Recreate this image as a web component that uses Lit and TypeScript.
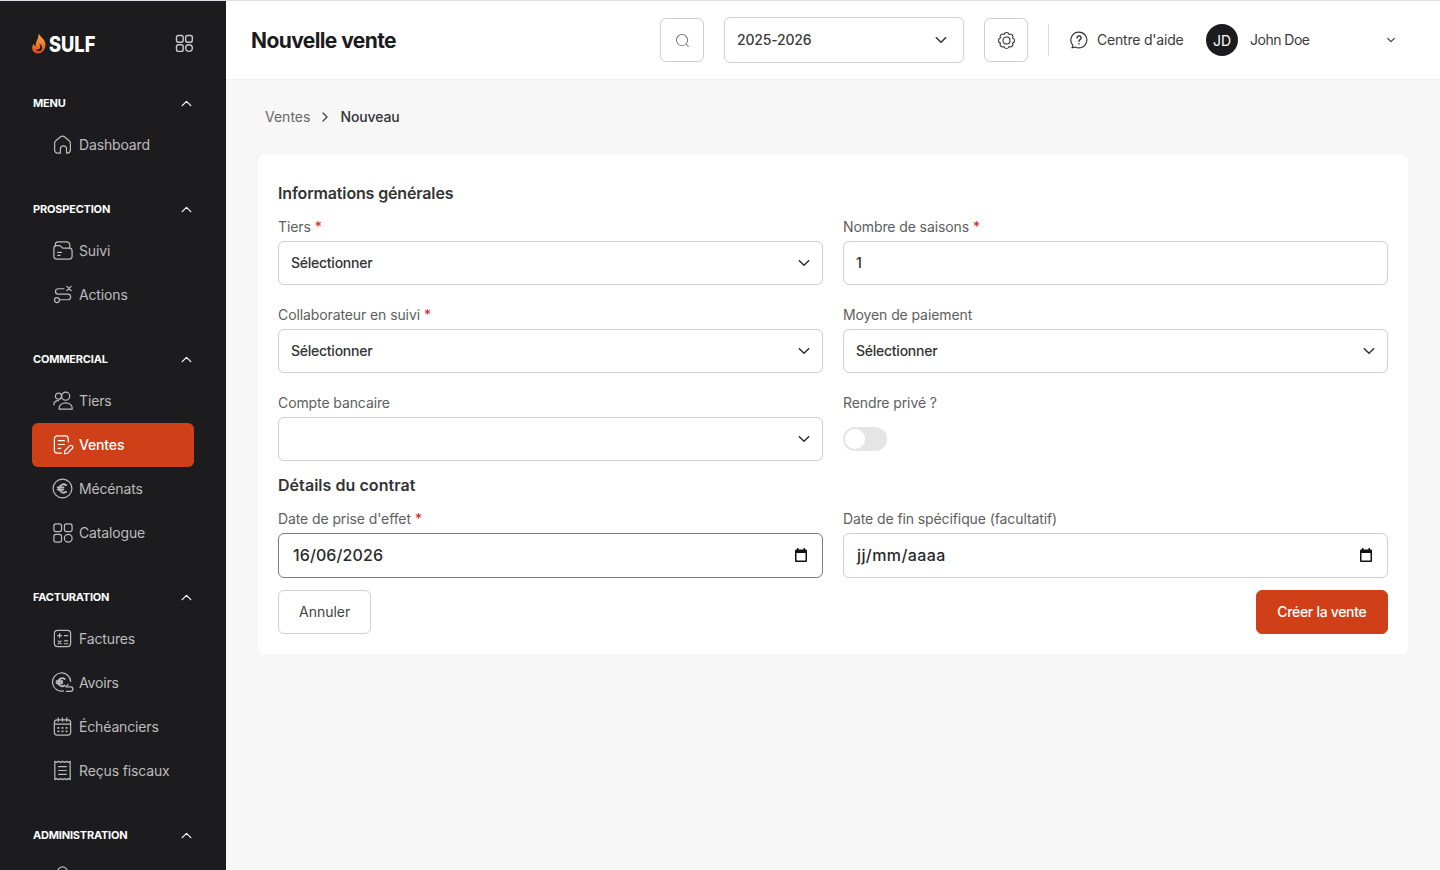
import { LitElement, css, html, svg } from "lit";
import { customElement } from "lit/decorators.js";

const icons: Record<string, unknown> = {
  home: svg`<path d="M3.800 10.600c0-1 .4-1.900 1.200-2.500l5-4.100a3.200 3.200 0 0 1 4 0l5 4.100c.8.600 1.200 1.500 1.200 2.500v7.200c0 1.800-1.400 3.200-3.200 3.200h-.8v-4.300a3.200 3.200 0 0 0-6.400 0V21H7c-1.800 0-3.200-1.400-3.200-3.200z"/>`,
  folder: svg`<path d="M4.500 7.500V6c0-1.700 1.300-3 3-3h8.500c2 0 3.600 1.600 3.600 3.600V9.500"/><path d="M3 18V10c0-1.700 1.300-3 3-3h2.600c.8 0 1.500.4 2 1l.6.8c.4.5 1 .8 1.600.8H19c1.700 0 3 1.300 3 3V18c0 1.700-1.300 3-3 3H6c-1.700 0-3-1.300-3-3z"/><path d="M7 14h4M7 17h2.500"/>`,
  routing: svg`<path d="M16.500 3.500l4.500 4.500M21 3.500L16.500 8"/><path d="M13.500 6H7.500a2.800 2.800 0 0 0 0 5.600h10a2.900 2.900 0 0 1 0 5.900H9"/><circle cx="6.200" cy="17.800" r="2.600"/>`,
  users: svg`<circle cx="7.800" cy="7.500" r="3.200"/><path d="M3 16.500c0-2.500 2-4.300 4.800-4.300"/><circle cx="15.300" cy="7.500" r="4.200"/><path d="M8.500 21v-1.200c0-3 3-5.300 6.800-5.300s6.800 2.300 6.800 5.300V21z"/>`,
  note: svg`<path d="M18 9.500V6a3 3 0 0 0-3-3H6.500a3 3 0 0 0-3 3v12a3 3 0 0 0 3 3H11"/><path d="M7.500 8h6.500M7.500 12h6.500M7.500 16h2.500"/><path d="M14 21.500l.5-3 5-5a1.900 1.900 0 0 1 2.700 2.700l-5 5z"/>`,
  euro: svg`<circle cx="12" cy="12" r="9.800"/><path d="M15.800 8.500a4.400 4.400 0 0 0-7 3.500 4.400 4.400 0 0 0 7 3.500M7 10.900h6M7 13.100h6" stroke-width="1.900"/>`,
  grid: svg`<rect x="3" y="3" width="8" height="8" rx="2.200"/><rect x="14" y="3" width="8" height="8" rx="2.200"/><rect x="3" y="14" width="8" height="8" rx="2.200"/><circle cx="18" cy="18" r="4"/>`,
  calc: svg`<rect x="3.500" y="3.500" width="17" height="17" rx="3.500"/><path d="M7 9h4M9 7v4M14 9h3.500M7.500 14.500l3 3M10.500 14.500l-3 3M14 14.500h3.500M14 17.500h3.500"/>`,
  credit: svg`<path d="M13 20.800a9.500 9.500 0 1 1 7.500-10"/><path d="M14.300 8.300a4.300 4.300 0 0 0-6.800 3.400 4.300 4.300 0 0 0 6.800 3.400M5.800 10.600h6M5.800 12.800h6" stroke-width="1.900"/><path d="M18 14l-2.500 2.500h5a2.300 2.300 0 0 1 0 4.700H16"/>`,
  calendar: svg`<rect x="3.500" y="5" width="17" height="16" rx="3"/><path d="M3.500 9.500h17M7.500 3v3.500M12 3v3.500M16.500 3v3.500"/><path d="M7.500 13.500h.5M11.800 13.500h.5M16 13.500h.5M7.500 17h.5M11.800 17h.5M16 17h.5" stroke-width="1.800"/>`,
  receipt: svg`<path d="M4 2.500l2 1 2-1 2 1 2-1 2 1 2-1 2 1 2-1v19l-2-1-2 1-2-1-2 1-2-1-2 1-2-1-2 1z"/><path d="M8 8h8M8 12h8M8 16h8"/>`,
  user: svg`<circle cx="12" cy="7" r="5"/><path d="M4 21c0-3.500 3.500-6 8-6s8 2.500 8 6"/>`,
};

const sections = [
  { title: "MENU", items: [{ icon: "home", label: "Dashboard" }] },
  { title: "PROSPECTION", items: [{ icon: "folder", label: "Suivi" }, { icon: "routing", label: "Actions" }] },
  {
    title: "COMMERCIAL",
    items: [
      { icon: "users", label: "Tiers" },
      { icon: "note", label: "Ventes", active: true },
      { icon: "euro", label: "Mécénats" },
      { icon: "grid", label: "Catalogue" },
    ],
  },
  {
    title: "FACTURATION",
    items: [
      { icon: "calc", label: "Factures" },
      { icon: "credit", label: "Avoirs" },
      { icon: "calendar", label: "Échéanciers" },
      { icon: "receipt", label: "Reçus fiscaux" },
    ],
  },
  // only the top of the next icon is visible, the row is cut by the window
  { title: "ADMINISTRATION", items: [{ icon: "user", label: "" }] },
];

// eight scallops round the centre of a 24 box
const gearPath = (() => {
  const pt = (i: number) => {
    const a = ((i + 0.5) * Math.PI) / 4;
    return `${(12 + 8.2 * Math.cos(a)).toFixed(2)} ${(12 + 8.2 * Math.sin(a)).toFixed(2)}`;
  };
  let d = `M${pt(0)}`;
  for (let i = 1; i <= 8; i++) d += `A3.200 3.200 0 0 1 ${pt(i % 8)}`;
  return d + "z";
})();

const chevron = (cls = "chev") => html`<svg class=${cls} viewBox="0 0 12 12" fill="none" stroke="currentColor" stroke-width="1.300" stroke-linecap="round" stroke-linejoin="round"><path d="M2 4l4 4 4-4"/></svg>`;

const calendarGlyph = html`<svg class="cal" viewBox="0 0 14 14"><path d="M3 0h1.500v1.500h5V0H11v1.500h1a1 1 0 0 1 1 1V13a1 1 0 0 1-1 1H2a1 1 0 0 1-1-1V2.500a1 1 0 0 1 1-1h1zM2.500 5v7.500h9V5z" fill="#111"/></svg>`;

@customElement("app-root")
export class AppRoot extends LitElement {
  static styles = css`
    :host {
      display: flex;
      height: 870px;
      overflow: hidden;
      box-sizing: border-box;
      border-top: 1px solid #dfdfe6;
      background: #f7f7f7;
      font-family: Inter, "Noto Sans", sans-serif;
      font-size: 14px;
      color: #3a3a3a;
    }
    * { box-sizing: border-box; }

    .side {
      flex: 0 0 226px;
      background: #1c1b1d;
      padding: 0 32px;
      overflow: hidden;
      color: #bdbdbd;
    }
    .brand {
      height: 82px;
      display: flex;
      align-items: center;
      justify-content: space-between;
      padding-top: 4px;
    }
    .logo { display: flex; align-items: center; gap: 3px; color: #fff; font-weight: 800; font-size: 21px; }
    .logo svg { width: 14px; height: 21px; margin-top: -2px; }
    .logo span { display: block; width: 47px; transform: scaleX(0.87); transform-origin: left center; }
    .apps { width: 20px; height: 20px; margin-top: -2px; color: #c9c9c9; }
    .section { margin-bottom: 22px; }
    .sec-head {
      height: 40px;
      display: flex;
      align-items: center;
      justify-content: space-between;
      padding-left: 1px;
      color: #fff;
      font-weight: 700;
      font-size: 11px;
      letter-spacing: -0.2px;
    }
    .sec-head svg { width: 13px; height: 13px; margin-right: 1.500px; transform: rotate(180deg); stroke-width: 1.100; }
    .item {
      height: 44px;
      display: flex;
      align-items: center;
      gap: 5px;
      padding: 0 0 1px 19px;
      border-radius: 6px;
      letter-spacing: -0.150px;
    }
    .item svg {
      width: 23px;
      height: 23px;
      fill: none;
      stroke: currentColor;
      stroke-width: 1.250;
      stroke-linecap: round;
      stroke-linejoin: round;
      flex: none;
    }
    .item.active { background: #cf4018; color: #fff; font-weight: 500; }

    .main { flex: 1; display: flex; flex-direction: column; min-width: 0; }
    .top {
      height: 79px;
      background: #fff;
      display: flex;
      align-items: center;
      padding: 0 42px 0 25px;
      border-bottom: 1px solid #f1f1f1;
    }
    h1 { margin: 0; flex: 1; font-size: 21px; font-weight: 700; letter-spacing: -0.600px; color: #1c1b1d; }
    .sq {
      width: 44px;
      height: 44px;
      display: flex;
      align-items: center;
      justify-content: center;
      border: 1px solid #cfcfcf;
      border-radius: 6px;
      color: #333;
    }
    .sq svg { fill: none; stroke: currentColor; }
    .search { color: #777; }
    .year {
      width: 240px;
      height: 46px;
      margin: 0 20px;
      display: flex;
      align-items: center;
      justify-content: space-between;
      padding: 0 15px 1px 12px;
      border: 1px solid #cfcfcf;
      border-radius: 6px;
      font-weight: 500;
      letter-spacing: -0.200px;
    }
    .chev { width: 14px; height: 14px; color: #333; }
    .vr { width: 1px; height: 32px; background: #d8d8d8; margin: 0 20px; }
    .help { display: flex; align-items: center; gap: 8px; width: 137px; padding-bottom: 1px; letter-spacing: -0.200px; }
    .help svg { width: 20px; height: 20px; flex: none; fill: none; stroke: #333; stroke-width: 1.400; stroke-linecap: round; stroke-linejoin: round; }
    .avatar {
      width: 32px;
      height: 32px;
      border-radius: 50%;
      background: #1c1b1d;
      color: #fff;
      display: flex;
      align-items: center;
      justify-content: center;
      font-size: 14px;
      margin-right: 12px;
    }
    .user { flex: 0 0 148px; display: flex; align-items: center; justify-content: space-between; padding: 0 2px 1px 0; letter-spacing: -0.500px; }
    .user .chev { width: 10px; height: 10px; }

    .content { padding: 0 32px; }
    .crumb { height: 75px; padding: 0 0 2px 7px; display: flex; align-items: center; gap: 9px; color: #666; }
    .crumb b { font-weight: 500; color: #333; letter-spacing: -0.100px; }
    .crumb svg { width: 12px; height: 12px; color: #444; transform: rotate(-90deg); }
    .card { background: #fff; border-radius: 6px; padding: 20px; height: 499px; }
    h2 { margin: 0; height: 36px; display: flex; align-items: center; font-size: 16px; font-weight: 600; letter-spacing: -0.150px; color: #333; }
    h2.sub { height: 28px; padding-bottom: 8px; letter-spacing: 0.050px; }
    .grid { display: grid; grid-template-columns: 1fr 1fr; column-gap: 20px; }
    .field { height: 88px; }
    .lab { height: 30px; display: flex; align-items: center; gap: 4px; color: #5e5e5e; letter-spacing: -0.100px; }
    .lab i { color: #d42020; font-style: normal; }
    .ctl {
      height: 44px;
      display: flex;
      align-items: center;
      justify-content: space-between;
      padding: 0 11px 1px 12px;
      border: 1px solid #cfcfcf;
      border-radius: 6px;
      font-weight: 500;
      color: #333;
      letter-spacing: -0.250px;
    }
    .switch { width: 44px; height: 24px; margin-top: 10px; border-radius: 12px; background: #e5e5e5; padding: 2px; }
    .switch span { display: block; width: 20px; height: 20px; border-radius: 50%; background: #fff; }
    .row2 { height: 87px; }
    .date { height: 45px; font-size: 16px; color: #2a2a2a; padding-left: 13px; letter-spacing: 0.400px; }
    .date.on { border-color: #7a7a7a; padding-left: 14px; letter-spacing: 0.100px; }
    .cal { width: 14px; height: 14px; margin-right: 3px; }
    .actions { display: flex; justify-content: space-between; }
    .btn { height: 44px; display: flex; align-items: center; padding: 0 20px 1px; border-radius: 6px; border: 1px solid #cfcfcf; color: #444; }
    .btn.primary { padding: 0 20.500px 1px; background: #cf4018; border-color: #cf4018; color: #fff; font-weight: 500; letter-spacing: -0.300px; }
  `;

  private field(label: string, value: string, req = false, select = true) {
    return html`<div class="field">
      <div class="lab">${label}${req ? html`<i>*</i>` : ""}</div>
      <div class="ctl"><span>${value}</span>${select ? chevron() : ""}</div>
    </div>`;
  }

  private dateField(label: string, value: string, req: boolean, on: boolean) {
    return html`<div class="row2">
      <div class="lab">${label}${req ? html`<i>*</i>` : ""}</div>
      <div class="ctl date ${on ? "on" : ""}"><span>${value}</span>${calendarGlyph}</div>
    </div>`;
  }

  render() {
    return html`
      <aside class="side">
        <div class="brand">
          <div class="logo">
            <svg viewBox="0 0 14 21">
              <defs><linearGradient id="fl" x1="0" y1="0" x2="0" y2="1"><stop offset="0" stop-color="#f8b042"/><stop offset="0.6" stop-color="#f0762c"/><stop offset="1" stop-color="#e2421f"/></linearGradient></defs>
              <path d="M6.500 0c.6 3 5 5 6.500 9 1.600 5-1.500 11.500-7 11.500-3.500 0-5.800-2.500-5.800-5.500 0-1.800.8-3.300 1.600-4.300.2 1.400.8 2.300 1.700 2.800C3 9 7.500 5 6.500 0z" fill="url(#fl)"/>
              <path d="M3.500 16.500c2.500.8 4.800-.6 4.800-2.800 0-1.300-.7-2.300-1.300-3.200 2.700 1.200 3.600 3.600 2.900 5.700-.8 2.200-4.300 2.600-6.400.3z" fill="#1c1b1d"/>
            </svg>
            <span>SULF</span>
          </div>
          <svg class="apps" viewBox="0 0 24 24" fill="none" stroke="currentColor" stroke-width="1.700">${icons.grid}</svg>
        </div>
        ${sections.map(
          (s) => html`<section class="section">
            <div class="sec-head"><span>${s.title}</span>${chevron("")}</div>
            ${s.items.map(
              (it: { icon: string; label: string; active?: boolean }) => html`<div class="item ${it.active ? "active" : ""}">
                <svg viewBox="0 0 24 24">${icons[it.icon]}</svg>${it.label ? html`<span>${it.label}</span>` : ""}
              </div>`,
            )}
          </section>`,
        )}
      </aside>
      <div class="main">
        <header class="top">
          <h1>Nouvelle vente</h1>
          <div class="sq search"><svg width="15" height="15" viewBox="0 0 16 16" stroke-width="1.100"><circle cx="7.500" cy="7.500" r="6"/><path d="M12 12l2.500 2.500"/></svg></div>
          <div class="year"><span>2025-2026</span>${chevron()}</div>
          <div class="sq">
            <svg width="19" height="19" viewBox="0 0 24 24" stroke-width="1.400" stroke-linejoin="round"><path d=${gearPath}/><circle cx="12" cy="12" r="4.500"/></svg>
          </div>
          <div class="vr"></div>
          <div class="help">
            <svg viewBox="0 0 24 24"><path d="M12 2.500a9.500 9.500 0 1 1-4.500 17.900c-1.300.6-2.800.9-4 .8.800-.8 1.200-1.800 1.100-3A9.500 9.500 0 0 1 12 2.500z"/><path d="M9.700 9.500a2.400 2.400 0 1 1 3.600 2.100c-.8.500-1.300 1-1.300 1.900M12 16.500v.3" stroke-width="1.700"/></svg>
            <span>Centre d'aide</span>
          </div>
          <div class="avatar">JD</div>
          <div class="user"><span>John Doe</span>${chevron()}</div>
        </header>
        <div class="content">
          <nav class="crumb"><span>Ventes</span>${chevron("")}<b>Nouveau</b></nav>
          <div class="card">
            <h2>Informations générales</h2>
            <div class="grid">
              ${this.field("Tiers", "Sélectionner", true)}
              ${this.field("Nombre de saisons", "1", true, false)}
              ${this.field("Collaborateur en suivi", "Sélectionner", true)}
              ${this.field("Moyen de paiement", "Sélectionner")}
              ${this.field("Compte bancaire", "")}
              <div class="field">
                <div class="lab">Rendre privé ?</div>
                <div class="switch"><span></span></div>
              </div>
            </div>
            <h2 class="sub">Détails du contrat</h2>
            <div class="grid">
              ${this.dateField("Date de prise d'effet", "16/06/2026", true, true)}
              ${this.dateField("Date de fin spécifique (facultatif)", "jj/mm/aaaa", false, false)}
            </div>
            <div class="actions">
              <div class="btn">Annuler</div>
              <div class="btn primary">Créer la vente</div>
            </div>
          </div>
        </div>
      </div>
    `;
  }
}
